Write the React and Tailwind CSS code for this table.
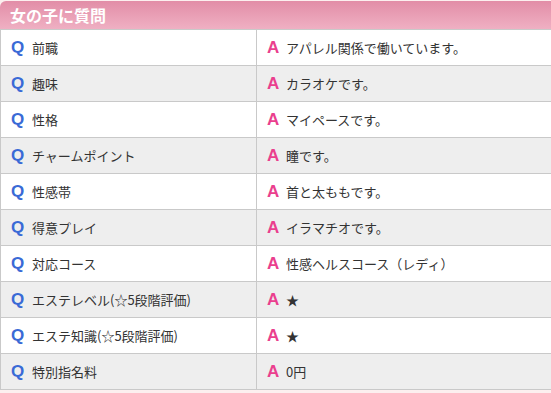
import React from 'react';

const rows = [
  { q: '前職', a: 'アパレル関係で働いています。' },
  { q: '趣味', a: 'カラオケです。' },
  { q: '性格', a: 'マイペースです。' },
  { q: 'チャームポイント', a: '瞳です。' },
  { q: '性感帯', a: '首と太ももです。' },
  { q: '得意プレイ', a: 'イラマチオです。' },
  { q: '対応コース', a: '性感ヘルスコース（レディ）' },
  { q: 'エステレベル(☆5段階評価)', a: '★' },
  { q: 'エステ知識(☆5段階評価)', a: '★' },
  { q: '特別指名料', a: '0円' },
];

const jp = { fontFamily: '"Noto Sans CJK JP", "Noto Sans", sans-serif' };

const QaRow = ({ q, a, odd }) => (
  <div className={`flex h-[36px] border-b border-[#c9c9c9] ${odd ? 'bg-[#eeeeee]' : 'bg-white'}`}>
    <div className="flex w-[256px] shrink-0 items-center border-r border-[#c9c9c9] pl-[10px]">
      <span className="w-[21px] font-['Liberation_Sans'] text-[17px] font-bold leading-none text-[#3a6ad6]">Q</span>
      <span className="text-[13px] text-[#333333]" style={jp}>{q}</span>
    </div>
    <div className="flex flex-1 items-center pl-[10px]">
      <span className="w-[19px] font-['Liberation_Sans'] text-[17px] font-bold leading-none text-[#ea3f8e]">A</span>
      <span className="text-[13px] text-[#333333]" style={jp}>{a}</span>
    </div>
  </div>
);

export default function App() {
  return (
    <div className="h-[393px] w-[551px] overflow-hidden bg-[#fcefef] pt-px">
      <div className="w-[560px]">
        <div className="flex h-[28px] items-center rounded-tl-[6px] bg-gradient-to-b from-[#e28da7] to-[#efb0c3] pl-[10px]">
          <span className="text-[16px] font-bold text-white" style={jp}>女の子に質問</span>
        </div>
        <div className="border-l border-t border-[#c9c9c9]">
          {rows.map((r, i) => (
            <QaRow key={i} q={r.q} a={r.a} odd={i % 2 === 1} />
          ))}
        </div>
      </div>
    </div>
  );
}
